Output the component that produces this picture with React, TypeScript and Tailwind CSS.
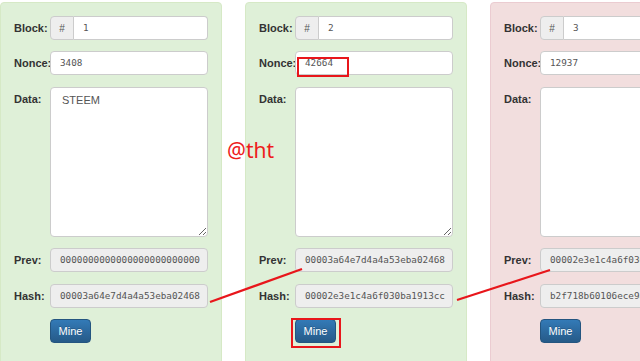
import React from 'react';

type BlockProps = {
  num: string;
  nonce: string;
  data: string;
  prev: string;
  hash: string;
  ok: boolean;
};

const mono = { fontFamily: '"DejaVu Sans Mono", monospace' };

function Block({ num, nonce, data, prev, hash, ok }: BlockProps) {
  const card = ok
    ? 'bg-[#dff0d8] border-[#d6e9c6]'
    : 'bg-[#f2dede] border-[#ebccd1]';
  return (
    <div className={`shrink-0 w-[222px] h-[400px] border rounded-[4px] pt-[13px] px-[13px] ${card}`}>
      <div className="flex items-start">
        <label className="w-[36px] pt-[4px] text-[11px] font-bold text-[#333]">Block:</label>
        <div className="flex w-[158px] h-[24px]">
          <span className="w-[24px] flex items-center justify-center bg-[#eee] border border-[#ccc] rounded-l-[4px] text-[10px] text-[#555]">#</span>
          <div className="flex-1 flex items-center pl-[9px] bg-white border border-l-0 border-[#ccc] rounded-r-[4px] text-[9.3px] text-[#555]" style={mono}>{num}</div>
        </div>
      </div>
      <div className="flex items-start mt-[11px]">
        <label className="w-[36px] pt-[4px] text-[11px] font-bold text-[#333]">Nonce:</label>
        <div className="w-[158px] h-[24px] flex items-center pl-[9px] bg-white border border-[#ccc] rounded-[4px] text-[9.3px] text-[#555]" style={mono}>{nonce}</div>
      </div>
      <div className="flex items-start mt-[12px]">
        <label className="w-[36px] pt-[4px] text-[11px] font-bold text-[#333]">Data:</label>
        <textarea
          readOnly
          value={data}
          className="w-[158px] h-[150px] px-[11px] py-[4px] bg-white border border-[#ccc] rounded-[4px] text-[11px] text-[#555] outline-none"
        />
      </div>
      <div className="flex items-start mt-[11px]">
        <label className="w-[36px] pt-[4px] text-[11px] font-bold text-[#333]">Prev:</label>
        <div className="w-[158px] h-[24px] flex items-center pl-[9px] bg-[#eee] border border-[#ccc] rounded-[4px] text-[9.3px] text-[#555] overflow-hidden whitespace-nowrap" style={mono}>{prev}</div>
      </div>
      <div className="flex items-start mt-[12px]">
        <label className="w-[36px] pt-[4px] text-[11px] font-bold text-[#333]">Hash:</label>
        <div className="w-[158px] h-[24px] flex items-center pl-[9px] bg-[#eee] border border-[#ccc] rounded-[4px] text-[9.3px] text-[#555] overflow-hidden whitespace-nowrap" style={mono}>{hash}</div>
      </div>
      <div className="flex mt-[11px] pl-[36px]">
        <button className="w-[41px] h-[24px] rounded-[4px] border border-[#245580] bg-linear-to-b from-[#337ab7] to-[#265a88] text-white text-[11px] [text-shadow:0_-1px_0_rgba(0,0,0,0.2)]">Mine</button>
      </div>
    </div>
  );
}

export default function App() {
  const blocks: BlockProps[] = [
    { num: '1', nonce: '3408', data: 'STEEM', prev: '0000000000000000000000000', hash: '00003a64e7d4a4a53eba02468', ok: true },
    { num: '2', nonce: '42664', data: '', prev: '00003a64e7d4a4a53eba02468', hash: '00002e3e1c4a6f030ba1913cc', ok: true },
    { num: '3', nonce: '12937', data: '', prev: '00002e3e1c4a6f030ba1913cc', hash: 'b2f718b60106ece9a01cd2e3f', ok: false },
  ];

  return (
    <div className="relative w-[640px] h-[361px] overflow-hidden bg-white" style={{ fontFamily: '"Liberation Sans", Arial, sans-serif' }}>
      <div className="flex gap-[23px] pt-[2px]">
        {blocks.map(b => <Block key={b.num} {...b} />)}
      </div>

      <svg className="absolute inset-0 pointer-events-none" width="640" height="361">
        <line x1="210" y1="302" x2="302" y2="269" stroke="#e8161b" strokeWidth="2.2" />
        <line x1="457" y1="300" x2="550" y2="270" stroke="#e8161b" strokeWidth="2.2" />
      </svg>

      <div className="absolute left-[297px] top-[57px] w-[52px] h-[20px] border-2 border-[#e8161b]" />
      <div className="absolute left-[291px] top-[318px] w-[50px] h-[30px] border-2 border-[#e8161b]" />

      <div className="absolute left-[227px] top-[140px] text-[21px] leading-none text-[#ee1c1c]" style={{ fontFamily: '"Noto Sans", sans-serif' }}>@tht</div>
    </div>
  );
}
